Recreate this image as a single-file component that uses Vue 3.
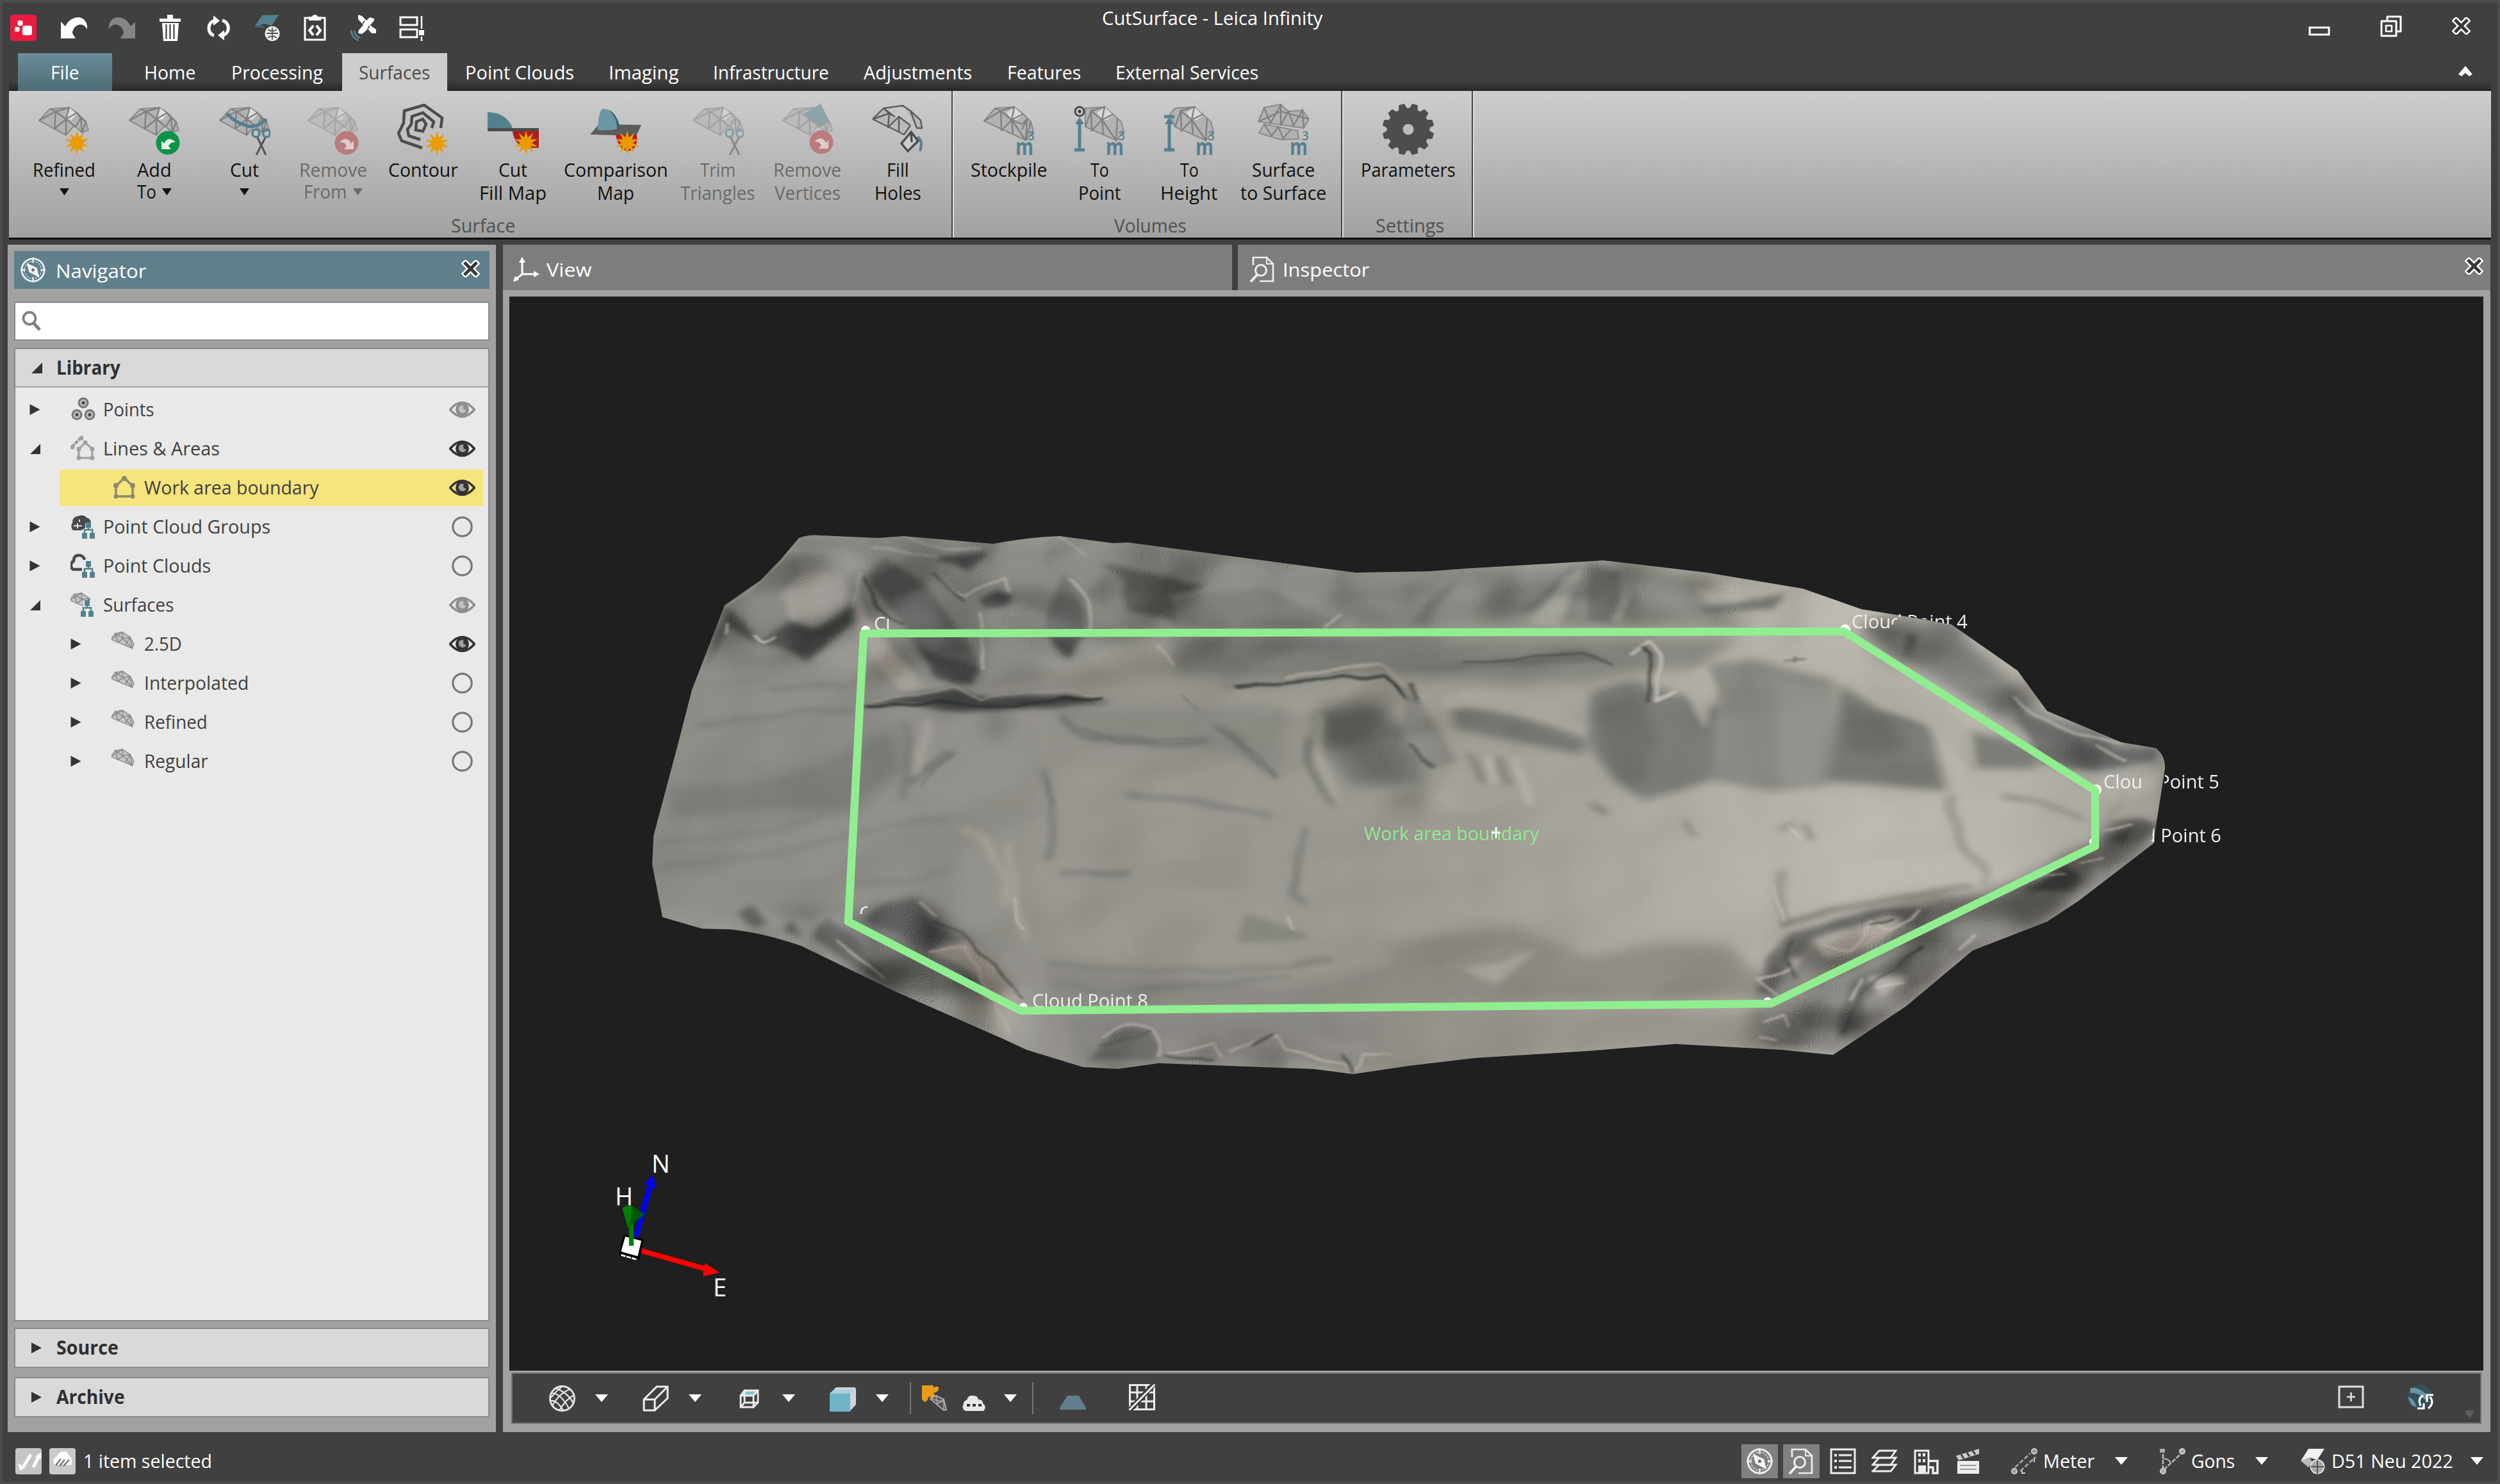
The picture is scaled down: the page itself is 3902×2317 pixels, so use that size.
<script setup>
const vFit = {
  mounted(el, { value }) {
    const natural = el.offsetWidth
    if (!natural || !value) return
    el.style.transform = `scaleX(${value / natural})`
    el.style.marginRight = `${value - natural}px`
  },
}

const radial = (cx, cy, outer, inner, count, ky = 1) =>
  Array.from({ length: count * 2 }, (_, i) => {
    const r = i % 2 ? inner : outer
    const a = (Math.PI * i) / count - Math.PI / 2
    return `${(cx + r * Math.cos(a)).toFixed(1)},${(cy + r * ky * Math.sin(a)).toFixed(1)}`
  }).join(' ')

const burst = radial(60, 61, 19, 9, 10)

const gear = Array.from({ length: 12 }, (_, i) =>
  [[-10.5, 33], [-6, 40], [6, 40], [10.5, 33]].map(([d, r]) => {
    const a = ((i * 30 + 15 + d) * Math.PI) / 180
    return `${(40 + r * Math.cos(a)).toFixed(1)},${(40 + r * Math.sin(a)).toFixed(1)}`
  }).join(' ')
).join(' ')

const quick = ['undo', 'redo', 'trash', 'sync', 'capglobe', 'clip', 'sat', 'layout']

const tabs = [
  ['Home', 80], ['Processing', 143], ['Surfaces', 111], ['Point Clouds', 170], ['Imaging', 110],
  ['Infrastructure', 181], ['Adjustments', 169], ['Features', 115], ['External Services', 223],
]

const groups = [
  {
    name: 'Surface', w: 100, width: 1473, pad: 16,
    items: [
      { icon: 'refined', width: 140, lines: [['Refined', 98], ['', 0]], arrow: true },
      { icon: 'add', width: 142, lines: [['Add', 54], ['To', 30]], arrow: true },
      { icon: 'cut', width: 139, lines: [['Cut', 45], ['', 0]], arrow: true },
      { icon: 'remove', width: 138, lines: [['Remove', 106], ['From', 67]], arrow: true, off: true },
      { icon: 'contour', width: 142, lines: [['Contour', 109]] },
      { icon: 'cutfill', width: 140, lines: [['Cut', 45], ['Fill Map', 105]] },
      { icon: 'compare', width: 180, lines: [['Comparison', 162], ['Map', 58]] },
      { icon: 'trim', width: 139, lines: [['Trim', 55], ['Triangles', 116]], off: true },
      { icon: 'vertices', width: 141, lines: [['Remove', 106], ['Vertices', 103]], off: true },
      { icon: 'fill', width: 140, lines: [['Fill', 35], ['Holes', 73]] },
    ],
  },
  {
    name: 'Volumes', w: 113, width: 608, pad: 18,
    items: [
      { icon: 'stockpile', width: 140, lines: [['Stockpile', 120]] },
      { icon: 'topoint', width: 142, lines: [['To', 29], ['Point', 67]] },
      { icon: 'toheight', width: 138, lines: [['To', 29], ['Height', 89]] },
      { icon: 'surfsurf', width: 156, lines: [['Surface', 98], ['to Surface', 134]] },
    ],
  },
  {
    name: 'Settings', w: 107, width: 204, pad: 15,
    items: [{ icon: 'gear', width: 176, lines: [['Parameters', 148]] }],
  },
]

const tree = [
  { t: 'Points', w: 80, icon: 'points', arrow: 'right', eye: 'dim' },
  { t: 'Lines & Areas', w: 182, icon: 'lines', arrow: 'open', eye: 'on' },
  { t: 'Work area boundary', w: 273, icon: 'area', sub: true, sel: true, eye: 'on' },
  { t: 'Point Cloud Groups', w: 261, icon: 'pcgroup', arrow: 'right', eye: 'off' },
  { t: 'Point Clouds', w: 168, icon: 'pcloud', arrow: 'right', eye: 'off' },
  { t: 'Surfaces', w: 110, icon: 'surfaces', arrow: 'open', eye: 'dim' },
  { t: '2.5D', w: 59, icon: 'mesh-s', sub: true, arrow: 'right', eye: 'on' },
  { t: 'Interpolated', w: 163, icon: 'mesh-s', sub: true, arrow: 'right', eye: 'off' },
  { t: 'Refined', w: 99, icon: 'mesh-s', sub: true, arrow: 'right', eye: 'off' },
  { t: 'Regular', w: 100, icon: 'mesh-s', sub: true, arrow: 'right', eye: 'off' },
]
</script>

<template>
  <div class="app">
    <svg class="sheet" width="0" height="0" aria-hidden="true">
      <defs>
        <symbol id="logo" viewBox="0 0 41 41">
          <rect width="41" height="41" rx="5" fill="#ed1a3f" />
          <rect x="19" y="17" width="15" height="15" rx="3" fill="#fff" />
          <rect x="11.500" y="9" width="8" height="8" rx="2" fill="#fff" />
          <rect x="7" y="19" width="7.500" height="7.500" rx="2" fill="#fff" />
        </symbol>
        <symbol id="undo" viewBox="0 0 41 41">
          <path d="M0 11 L7 18 C12 8 20 4 28 4 C37 5 42 13 41 23 C38 16 31 13 25 17 C20 20 18 25 18 29 L23 37 L0 37 Z" fill="#fff" />
        </symbol>
        <symbol id="redo" viewBox="0 0 41 41">
          <path d="M41 11 L34 18 C29 8 21 4 13 4 C4 5 -1 13 0 23 C3 16 10 13 16 17 C21 20 23 25 23 29 L18 37 L41 37 Z" fill="#858585" />
        </symbol>
        <symbol id="trash" viewBox="0 0 41 41">
          <path d="M4 6h33v5H4zM16 0h9v7h-9zM8 13h26l-2 28H10z" fill="#fff" />
          <path d="M14.500 15v23M20.500 15v23M26.500 15v23" stroke="#404040" stroke-width="2.200" />
        </symbol>
        <symbol id="sync" viewBox="0 0 41 41">
          <path d="M13 32 C2 30 2 11 15 9 M26 9 C38 11 39 30 26 32" fill="none" stroke="#fff" stroke-width="5" />
          <path d="M12 1 L22 9.500 L12 17Z M29 24 L19 32 L29 40Z" fill="#fff" />
        </symbol>
        <symbol id="capglobe" viewBox="0 0 41 41">
          <path d="M13 1 L39 0 L28 17 L16 14 L1 19 Z" fill="#54808e" />
          <path d="M1 19 L13 15 L18 21 Z" fill="#3f6470" />
          <circle cx="29" cy="29.500" r="11.500" fill="#ededed" />
          <path d="M20 29h18M29 20v19M22 23q7 5 14 0M22 36q7-5 14 0" fill="none" stroke="#555" stroke-width="1.800" />
        </symbol>
        <symbol id="clip" viewBox="0 0 41 41">
          <path d="M5 5h31v34H5z" fill="none" stroke="#fff" stroke-width="3" />
          <path d="M11 3h5q1-3 4.500-3t4.500 3h5v6H11z" fill="#fff" />
          <path d="M18 17 L12 24.500 L18 32 M23 17 L29 24.500 L23 32" fill="none" stroke="#fff" stroke-width="4" />
        </symbol>
        <symbol id="sat" viewBox="0 0 41 41">
          <path d="M12 0 L18 2 L25 9 L30 4 L37 6 L37 9 L31 16 L33 18 L40 23 L40 29 L33 29 L27 22 L22 27 L18 30 L12 29 L13 24 L20 16 L12 7 Z" fill="#fff" />
          <path d="M22 9 L19 14 M30 17 L27 22" stroke="#404040" stroke-width="1.500" />
          <path d="M1 24 Q2 37 13 40 M6 25 Q7 34 15 36" fill="none" stroke="#54808e" stroke-width="2.800" />
        </symbol>
        <symbol id="layout" viewBox="0 0 41 41">
          <path d="M3 4h26v12H3zM3 23h26v12H3z" fill="none" stroke="#fff" stroke-width="3" />
          <path d="M36 2v20M36 34v7" stroke="#fff" stroke-width="2.500" /><rect x="32" y="24" width="8" height="8" fill="#fff" />
        </symbol>

        <symbol id="mesh-cut" viewBox="0 0 80 80">
          <path d="M1 26 L18 8 L48 6 L60 14 L74 28 L78 41 L68 45 L56 34 L43 49 Z" fill="#b2b2b2" stroke="#8a8a8a" stroke-width="2" stroke-linejoin="round" />
          <path d="M48 6 L60 16 L52 25 L43 24 Z" fill="#dedede" />
          <path d="M1 26 L27 12 L48 6 L43 24 L27 12 L25 39 L43 24 L43 49 M18 8 L27 12 M43 24 L60 14 M43 24 L58 36 L66 22 L60 14 M66 22 L74 28 L68 45 L66 22" fill="none" stroke="#808080" stroke-width="2.400" stroke-linejoin="round" />
        </symbol>
        <symbol id="mesh-full" viewBox="0 0 80 80">
          <path d="M1 27 L18 7 L48 5 L62 16 L74 28 L78 44 L66 57 Z" fill="#b2b2b2" stroke="#8a8a8a" stroke-width="2.200" stroke-linejoin="round" />
          <path d="M48 5 L62 18 L52 25 L44 25 L36 14 Z" fill="#d8d8d8" />
          <path d="M1 27 L27 11 L48 5 L44 25 L27 11 L28 42 L44 25 L46 48 M18 7 L27 11 M44 25 L62 16 M44 25 L66 57 L68 24 L60 40 M44 25 L60 32 L68 24 M74 28 L66 57" fill="none" stroke="#808080" stroke-width="2.400" stroke-linejoin="round" />
        </symbol>
        <symbol id="m3" viewBox="0 0 80 80">
          <text x="50" y="80" font-family="Open Sans, sans-serif" font-weight="700" font-size="35" fill="#54808e" textLength="28" lengthAdjust="spacingAndGlyphs">m</text>
          <text x="69" y="57" font-family="Open Sans, sans-serif" font-weight="600" font-size="19" fill="#54808e">3</text>
        </symbol>
        <symbol id="scissors" viewBox="0 0 80 80">
          <path d="M59 51 L73 80 M73 51 L58 80" stroke="#555" stroke-width="3" />
          <ellipse cx="57.500" cy="46" rx="5.500" ry="6" fill="none" stroke="#54808e" stroke-width="3.500" /><ellipse cx="74" cy="46" rx="5.500" ry="6" fill="none" stroke="#54808e" stroke-width="3.500" />
        </symbol>
        <symbol id="refined" viewBox="0 0 80 80"><use href="#mesh-cut" /><polygon :points="burst" fill="#ea9b00" /></symbol>
        <symbol id="add" viewBox="0 0 80 80"><use href="#mesh-cut" /><circle cx="61" cy="61" r="18.500" fill="#0b9447" /><path d="M51 58 L55 62 Q61 49 73 60 Q65 59 62 66 L66 71 L51 71Z" fill="#e5f0e8" /></symbol>
        <symbol id="cut" viewBox="0 0 80 80"><use href="#mesh-cut" /><path d="M12 15 Q25 30 45 35 Q60 38 74 24" fill="none" stroke="#54808e" stroke-width="5" /><use href="#scissors" /></symbol>
        <symbol id="remove" viewBox="0 0 80 80"><g opacity=".45"><use href="#mesh-cut" /></g><circle cx="61" cy="61" r="18.500" fill="#bb7b7d" /><path d="M72 58 L68 62 Q62 49 50 60 Q58 59 61 66 L57 71 L72 71Z" fill="#dccccc" /></symbol>
        <symbol id="contour" viewBox="0 0 80 80">
          <g fill="none" stroke="#4c4c4c" stroke-width="4.500"><path d="M39 69 L7 58 L2 46 L10 30 L11 11 L42 2 L70 22 L68 38" /><path d="M36 56 L18 50 L16 40 L22 32 L23 20 L40 14 L57 28 L54 38" /><path d="M30 28 L40 24 L45 32 L40 43 L29 41 Z" /></g><polygon :points="burst" transform="translate(2 1)" fill="#ea9b00" />
        </symbol>
        <symbol id="cutfill" viewBox="0 0 80 80"><path d="M0 13 Q30 14 39 38 L0 38Z" fill="#54808e" /><path d="M39 43 H81 V69 H62 Q42 66 39 43" fill="#ae1f1b" /><rect y="38" width="81" height="5" fill="#4c4c4c" /><polygon :points="burst" fill="#ea9b00" /></symbol>
        <symbol id="compare" viewBox="0 0 80 80"><path d="M14 32 L80 33 L72 50 L0 48Z" fill="#5c5c5c" /><path d="M40 49 H73 Q75 73 58 74 Q44 70 40 49" fill="#c01818" /><path d="M12 41 Q13 12 19 8 Q40 6 47 38 Q30 43 12 41" fill="#6d97a5" /><path d="M30 10 Q41 15 47 38 L42 40 Q42 22 30 10" fill="#3f6470" /><polygon :points="burst" transform="translate(-2 0)" fill="#ea9b00" /></symbol>
        <symbol id="trim" viewBox="0 0 80 80"><g opacity=".5"><use href="#mesh-cut" /><use href="#scissors" /></g></symbol>
        <symbol id="vertices" viewBox="0 0 80 80"><g opacity=".5"><use href="#mesh-cut" /></g><path d="M60 0 L74 28 L60 36 L33 16Z" fill="#8da2a9" /><circle cx="61" cy="60" r="18.500" fill="#bb7b7d" /><path d="M72 57 L68 61 Q62 48 50 59 Q58 58 61 65 L57 70 L72 70Z" fill="#dccccc" /></symbol>
        <symbol id="fill" viewBox="0 0 80 80">
          <path d="M1 24 L18 7 L30 15 L35 22 L48 23 L58 36 L50 48 Z M48 3 L60 13 L78 30 L78 38 L70 38 L62 24Z" fill="#b8b8b8" />
          <path d="M1 24 L18 7 L48 3 L60 11 L76 26 L78 38 L70 38 L64 22 L60 11 M1 24 L50 48 L60 34 M1 24 L27 15 L18 7 L35 20 L27 15 L25 37 L42 20 L42 43 M42 20 L60 34" fill="none" stroke="#5c5c5c" stroke-width="2.400" stroke-linejoin="round" />
          <path d="M61 44 L46 62 L56 74 L72 58 Z L62 60" fill="#ccc" stroke="#4c4c4c" stroke-width="3.500" /><path d="M71 52 Q80 56 75 74" fill="none" stroke="#54808e" stroke-width="4" />
        </symbol>
        <symbol id="stockpile" viewBox="0 0 80 80"><use href="#mesh-full" /><use href="#m3" /></symbol>
        <symbol id="topoint" viewBox="0 0 80 80"><path d="M18 7 L48 5 L74 28 L78 44 L66 57 L18 36Z" fill="#b2b2b2" stroke="#8a8a8a" stroke-width="2" /><path d="M48 5 L62 18 L52 25 L44 25 L36 14 Z" fill="#d8d8d8" /><path d="M18 36 L27 11 L48 5 L44 25 L27 11 L28 42 L44 25 L46 48 M44 25 L62 16 M44 25 L66 57 L68 24" fill="none" stroke="#808080" stroke-width="2.400" /><circle cx="9" cy="12" r="7" fill="none" stroke="#4c4c4c" stroke-width="3" /><circle cx="9" cy="12" r="2.500" fill="#333" /><path d="M9 72V30M1 72H17" stroke="#54808e" stroke-width="5" /><path d="M9 21L16 32H2Z" fill="#54808e" /><use href="#m3" /></symbol>
        <symbol id="toheight" viewBox="0 0 80 80"><path d="M10 16 L18 7 L48 5 L74 28 L78 44 L66 57 L18 36Z" fill="#b2b2b2" stroke="#8a8a8a" stroke-width="2" /><path d="M48 5 L62 18 L52 25 L44 25 L36 14 Z" fill="#d8d8d8" /><path d="M18 36 L27 11 L48 5 L44 25 L27 11 L28 42 L44 25 L46 48 M44 25 L62 16 M44 25 L66 57 L68 24" fill="none" stroke="#808080" stroke-width="2.400" /><path d="M9 72V24M1 72H17M1 20H17" stroke="#54808e" stroke-width="5" /><path d="M9 21L16 32H2Z" fill="#54808e" /><use href="#m3" /></symbol>
        <symbol id="surfsurf" viewBox="0 0 80 80"><path d="M1 28 L10 6 L36 1 L48 12 L70 10 L80 24 L72 38 Z M2 46 L10 32 L62 42 L64 55 L36 56Z" fill="#b2b2b2" stroke="#8a8a8a" stroke-width="2" /><path d="M10 6 L20 30 L36 2 L36 34 L48 12 L56 34 L70 10 L72 38 M1 28 L36 12 L80 24 M10 32 L22 50 L32 36 L40 54 L52 40" fill="none" stroke="#808080" stroke-width="2.200" /><use href="#m3" /></symbol>
        <symbol id="gear" viewBox="0 0 80 80"><polygon :points="gear" fill="#4d4d4d" stroke="#4d4d4d" stroke-width="1" stroke-linejoin="round" /><circle cx="40" cy="40" r="8.500" fill="#bcbcbc" /></symbol>

        <symbol id="compass" viewBox="0 0 41 41">
          <circle cx="20.500" cy="20.500" r="18.500" fill="none" stroke="#e8eef0" stroke-width="3" /><circle cx="20.500" cy="20.500" r="14" fill="none" stroke="#e8eef0" stroke-width="1.300" stroke-dasharray="3 2" />
          <path d="M20.500 0v9M20.500 32v9M0 20.500h8M33 20.500h8" stroke="#e8eef0" stroke-width="2.500" /><path d="M10 9 L27 17 L31 33 L14 24Z" fill="#f4f4f4" /><circle cx="20.500" cy="20.500" r="2.500" fill="#666" />
        </symbol>
        <symbol id="xmark" viewBox="0 0 29 27">
          <path d="M6.500 5.500 L22.500 21.500 M22.500 5.500 L6.500 21.500" stroke="#fff" stroke-width="10" stroke-linecap="square" /><path d="M6.500 5.500 L22.500 21.500 M22.500 5.500 L6.500 21.500" stroke="#383838" stroke-width="5" stroke-linecap="square" />
        </symbol>
        <symbol id="search" viewBox="0 0 30 32"><circle cx="12" cy="12" r="9.500" fill="none" stroke="#808080" stroke-width="3.800" /><path d="M18 19 L28 30" stroke="#808080" stroke-width="5" /></symbol>
        <symbol id="eye" viewBox="0 0 41 41">
          <path d="M1.500 20.500 Q20.500 -1.500 39.500 20.500 Q20.500 42.500 1.500 20.500Z" fill="none" stroke="currentColor" stroke-width="3.600" /><circle cx="20.500" cy="20.500" r="10.500" fill="currentColor" /><path d="M22 14 a6 6 0 1 0 4.500 8 l-4-1.500z" fill="#ddd" opacity=".65" />
        </symbol>
        <symbol id="ring" viewBox="0 0 41 41"><circle cx="20.500" cy="20.500" r="14.700" fill="none" stroke="#777" stroke-width="3.200" /></symbol>
        <symbol id="points" viewBox="0 0 41 41">
          <g fill="#bbb" stroke="#777" stroke-width="3"><circle cx="20" cy="10" r="7" /><circle cx="10" cy="28.500" r="7" /><circle cx="30" cy="28.500" r="7" /></g><g fill="#444"><circle cx="20" cy="10" r="2.500" /><circle cx="10" cy="28.500" r="2.500" /><circle cx="30" cy="28.500" r="2.500" /></g>
        </symbol>
        <symbol id="area" viewBox="0 0 41 41">
          <path d="M20 5 L7 18 M20 5 L33 18 M7 18 V34 H33 V18" fill="none" stroke="#8d8a6a" stroke-width="3.500" /><g fill="#8d8a6a"><circle cx="20" cy="6" r="4" /><circle cx="7" cy="17" r="4" /><circle cx="33" cy="17" r="4" /><circle cx="7" cy="34" r="3.500" /><circle cx="33" cy="34" r="3.500" /></g>
        </symbol>
        <symbol id="lines" viewBox="0 0 41 41">
          <path d="M2 18 L17 3" stroke="#999" stroke-width="4.500" stroke-dasharray="6 1.500" /><path d="M23 11 L13 21 V35 H34 V21Z" fill="none" stroke="#a5a5a5" stroke-width="3.500" /><g fill="#a0a0a0"><circle cx="3" cy="18" r="3.500" /><circle cx="17" cy="4" r="3.500" /><circle cx="23" cy="11" r="3.500" /><circle cx="13" cy="21" r="3.500" /><circle cx="34" cy="21" r="3.500" /><circle cx="13" cy="35" r="3.500" /><circle cx="34" cy="35" r="3.500" /></g>
        </symbol>
        <symbol id="nodes" viewBox="0 0 41 41"><path d="M28 16V24M22 32V25H34V32" fill="none" stroke="#54808e" stroke-width="2.600" /><path d="M24 13h8v9h-8zM18 30h8v9h-8zM30 30h8v9h-8z" fill="#54808e" /></symbol>
        <symbol id="pcgroup" viewBox="0 0 41 41"><path d="M4 26 Q-1 22 3 14 Q3 5 11 4 Q20 0 25 6 Q32 8 32 15 L23 15 V22 L17 26Z" fill="#4a4a4a" /><path d="M11 15v8M5 19h13M14 9v4" stroke="#ddd" stroke-width="2" /><use href="#nodes" /></symbol>
        <symbol id="pcloud" viewBox="0 0 41 41"><path d="M18 26 H4 Q-2 22 3 14 L5 13 Q5 4 13 4 Q20 4 22 11" fill="none" stroke="#4a4a4a" stroke-width="4.500" /><use href="#nodes" /></symbol>
        <symbol id="mesh-s" viewBox="0 0 41 41"><path d="M-1 13 L6 4 L17 2 L29 10 L35 21 L32 27Z" fill="#c6c6c6" stroke="#999" stroke-width="1.800" /><path d="M-1 13 L17 2 L18 12 L6 4 L10 18 L18 12 L32 27 L29 10 L18 12 M22 22 L29 10" fill="none" stroke="#8a8a8a" stroke-width="1.600" /></symbol>
        <symbol id="surfaces" viewBox="0 0 41 41"><use href="#mesh-s" /><path d="M20 13H36V41H16V28H20Z" fill="#e9e9e9" /><use href="#nodes" x="-2" /></symbol>

        <symbol id="axes" viewBox="0 0 41 41"><path d="M14 28 V8 M14 28 L4 36 M14 28 H35" fill="none" stroke="#fff" stroke-width="3" /><path d="M14 1 L19 10 H9Z M41 28 L32 23 V33Z M0 40 L3 31 L9 37Z" fill="#fff" /></symbol>
        <symbol id="inspect" viewBox="0 0 41 41"><path d="M6 14 V2 H27 L37 12 V39 H16" fill="none" stroke="#eee" stroke-width="2.700" /><path d="M27 2V12H37" fill="none" stroke="#eee" stroke-width="2" /><circle cx="18" cy="22" r="8.500" fill="none" stroke="#eee" stroke-width="3" /><path d="M12 29 L2 40" stroke="#eee" stroke-width="4" /></symbol>

        <symbol id="globe" viewBox="0 0 41 41"><g fill="none" stroke="#e6e6e6" stroke-width="2.800"><circle cx="20.500" cy="20.500" r="19" /><path d="M4 12 Q18 12 31 36 M10 4 Q30 12 38 28 M2 24 Q12 22 22 39 M33 6 Q16 12 5 32 M39 15 Q26 22 16 39 M20 2 Q10 10 3 19" stroke-width="2.200" /></g></symbol>
        <symbol id="boxwire" viewBox="0 0 41 41"><path d="M2 22H19V39H2Z L22 2H39L19 22M39 2V20L19 39" fill="none" stroke="#eee" stroke-width="3" stroke-linejoin="round" /></symbol>
        <symbol id="cubewire" viewBox="0 0 41 41"><path d="M13 9H32L28 15H9Z" fill="#8cc4d4" /><path d="M7 16H27V34H7Z L13 8H34V27L27 34M27 16L34 8M13 8V27H34M13 27L7 34" fill="none" stroke="#eee" stroke-width="2.800" /></symbol>
        <symbol id="cube" viewBox="0 0 41 41"><path d="M0 13 L10 3 H38 Q41 3 41 6 V30 L31 41V13Z" fill="#ccd4d7" /><rect y="13" width="32" height="28" fill="#6fb4c9" /><path d="M0 13 L6 7 H36 L32 13Z" fill="#a8cfd9" /></symbol>
        <symbol id="orange" viewBox="0 0 41 41"><path d="M0 0H17L19 4Q22 0 26 3Q27 7 23 10L18 12L21 17L17 21L11 17L8 24L4 26L0 22Z" fill="#ea9b1b" /><path d="M13 21 L22 16 L34 22 L38 38 L34 39Z" fill="#555" stroke="#aaa" stroke-width="2" /><path d="M22 16L24 29L34 22L34 39M13 21L34 26" stroke="#aaa" stroke-width="1.600" fill="none" /></symbol>
        <symbol id="cloud" viewBox="0 0 41 41"><path d="M6 40 Q-1 36 3 29 Q3 24 8 23 Q10 15 17 16 Q25 16 26 22 Q33 22 33 28 Q40 34 34 40Z" fill="#e8e8e8" /><path d="M8 29h5v4H8zM17 29h5v4h-5zM26 29h5v4h-5z" fill="#333" /></symbol>
        <symbol id="trapezoid" viewBox="0 0 41 41"><path d="M0 40V37L12 18H30L41 37V40Z" fill="#5f7f8a" /></symbol>
        <symbol id="gridoff" viewBox="0 0 41 41"><path d="M1.500 1.500H39.500V39.500H1.500ZM13 1V40M27 1V40M1 13H40M1 27H40" fill="none" stroke="#eee" stroke-width="3" /><path d="M39 0 L2 40" stroke="#404040" stroke-width="8" /><path d="M40 1 L1 40" stroke="#eee" stroke-width="3" /></symbol>
        <symbol id="plusbox" viewBox="0 0 41 41"><path d="M2 4H39V36H2Z" fill="none" stroke="#e0e0e0" stroke-width="3" /><path d="M20.500 13V27M14 20H27" stroke="#e0e0e0" stroke-width="2.600" /></symbol>
        <symbol id="globesync" viewBox="0 0 41 41"><circle cx="19" cy="20" r="19" fill="#35505a" /><path d="M4 6 Q20 4 34 22 L26 24 Q16 12 4 14Z M0 20 Q10 22 14 36 L6 33Z" fill="#6a95a3" /><path d="M24 18 Q15 22 20 34 M15 38H25V30 M32 38 Q42 30 35 20 M30 28V17H40" fill="none" stroke="#fff" stroke-width="3.200" /></symbol>

        <symbol id="list" viewBox="0 0 41 41"><path d="M2 2H39V39H2Z" fill="none" stroke="#eee" stroke-width="3" /><path d="M7 11h4M7 20h4M7 30h4" stroke="#eee" stroke-width="4" /><path d="M14 11h20M14 20h20M14 30h20" stroke="#eee" stroke-width="2.800" /></symbol>
        <symbol id="layers" viewBox="0 0 41 41"><g fill="#404040" stroke="#eee" stroke-width="2.800"><path d="M2 36 L12 26H38L30 36Z" /><path d="M2 26 L12 15H38L30 26Z" /><path d="M2 15 L12 4H38L30 15Z" /></g></symbol>
        <symbol id="building" viewBox="0 0 41 41"><path d="M3 4H24V39H3Z" fill="none" stroke="#eee" stroke-width="3" /><path d="M8 8h4v5H8zM15 8h4v5h-4zM8 17h4v5H8zM15 17h4v5h-4zM8 27h12v12H8z" fill="#eee" /><path d="M24 20H38V39H31V30H24" fill="none" stroke="#eee" stroke-width="3.500" /></symbol>
        <symbol id="clapper" viewBox="0 0 41 41"><path d="M4 20H38V40H4Z" fill="#eee" /><path d="M2 12 L38 1 V9 L6 19Z" fill="#ccc" /><path d="M10 10L14 16M19 7L23 13M28 4L32 10" stroke="#404040" stroke-width="3" /><path d="M8 27H34M8 33H34" stroke="#999" stroke-width="2" /></symbol>
        <symbol id="meter" viewBox="0 0 41 41"><path d="M6 30 L30 8 M14 36L38 14" stroke="#aaa" stroke-width="2.500" stroke-dasharray="7 3" /><circle cx="5" cy="36" r="4" fill="#999" stroke="#ccc" stroke-width="2" /><circle cx="36" cy="5" r="4" fill="#999" stroke="#ccc" stroke-width="2" /><path d="M17 35v4h5M36 15v7" stroke="#ccc" stroke-width="2" fill="none" /></symbol>
        <symbol id="gons" viewBox="0 0 41 41"><path d="M6 34V8M7 34L36 7" stroke="#bbb" stroke-width="2.500" stroke-dasharray="7 2" /><path d="M6 16Q17 17 18 24" fill="none" stroke="#bbb" stroke-width="2" /><path d="M1 1h8v6H1z" fill="#aaa" /><circle cx="6" cy="36" r="4" fill="#aaa" stroke="#ccc" stroke-width="2" /><circle cx="36" cy="5" r="4" fill="#aaa" stroke="#ccc" stroke-width="2" /></symbol>
        <symbol id="datum" viewBox="0 0 41 41"><path d="M14 1 H39 L28 18 L16 15 L2 20Z" fill="#f2f2f2" /><path d="M2 20 L16 15 L20 22 L14 30Z" fill="#bbb" /><circle cx="28" cy="29" r="10.500" fill="#aaa" stroke="#ddd" stroke-width="2" /><path d="M18 29H38M28 19V40" stroke="#555" stroke-width="2" /></symbol>
        <symbol id="chip1" viewBox="0 0 41 41"><rect width="41" height="41" rx="4" fill="#c3c5c7" /><path d="M24 10 L13 28 M38 10 L28 30" stroke="#fff" stroke-width="5" /><path d="M4 24 L16 30 L7 35Z M41 6 L31 13 L40 17Z" fill="#fff" /></symbol>
        <symbol id="chip2" viewBox="0 0 41 41"><rect width="41" height="41" rx="4" fill="#c9cacb" /><path d="M8 26 Q4 18 10 14 L17 6 L26 5 L34 15 Q37 20 34 26Z" fill="#fff" /><path d="M10 27L18 17M16 28L24 18M22 28L31 18" stroke="#777" stroke-width="2.600" /></symbol>
      </defs>
    </svg>

    <header class="title">
      <div class="quick">
        <svg class="i41 logo"><use href="#logo" /></svg>
        <svg v-for="q in quick" :key="q" class="i41"><use :href="'#' + q" /></svg>
      </div>
      <div class="caption"><span v-fit="344" class="t">CutSurface - Leica Infinity</span></div>
      <div class="winbtns">
        <svg width="34" height="34" viewBox="0 0 34 34"><path d="M2 19H32V30H2Z" fill="none" stroke="#fff" stroke-width="3" /></svg>
        <svg width="34" height="34" viewBox="0 0 34 34"><path d="M11 8V2H32V25H26" fill="none" stroke="#fff" stroke-width="3" stroke-linejoin="round" /><path d="M2 9H25V32H2Z" fill="none" stroke="#fff" stroke-width="3" stroke-linejoin="round" /><path d="M9 16H18V25H9Z" fill="none" stroke="#fff" stroke-width="2.500" /></svg>
        <svg width="29" height="27"><use href="#xmark" /></svg>
      </div>
    </header>

    <nav class="tabs">
      <div class="tab file"><span v-fit="45" class="t">File</span></div>
      <div v-for="[name, w] in tabs" :key="name" class="tab" :class="{ active: name === 'Surfaces' }"><span v-fit="w" class="t">{{ name }}</span></div>
      <svg class="collapse" width="22" height="16" viewBox="0 0 22 16"><path d="M0 13 L11 0 L22 13 L17 16 L11 11 L5 16Z" fill="#fff" /></svg>
    </nav>

    <section class="ribbon">
      <div v-for="g in groups" :key="g.name" class="group" :style="{ width: g.width + 'px' }">
        <div class="items" :style="{ paddingLeft: g.pad + 'px' }">
          <div v-for="b in g.items" :key="b.icon" class="btn" :class="{ off: b.off }" :style="{ width: b.width + 'px' }">
            <svg class="i80"><use :href="'#' + b.icon" /></svg>
            <div v-for="(l, i) in b.lines" :key="i" class="line" :class="{ up: b.arrow && i }">
              <span v-if="l[0]" v-fit="l[1]" class="t">{{ l[0] }}</span>
              <svg v-if="b.arrow && i" :class="{ gap: l[0] }" width="15" height="11" viewBox="0 0 15 11"><path d="M0 0H15L7.500 11Z" fill="currentColor" /></svg>
            </div>
          </div>
        </div>
        <div class="gname"><span v-fit="g.w" class="t">{{ g.name }}</span></div>
      </div>
    </section>

    <main class="body">
      <aside class="navp">
        <div class="nhead">
          <svg class="i39"><use href="#compass" /></svg>
          <span v-fit="142" class="t">Navigator</span>
          <svg class="end" width="29" height="27"><use href="#xmark" /></svg>
        </div>
        <div class="search"><svg width="30" height="32"><use href="#search" /></svg></div>
        <div class="library">
          <div class="shead"><svg class="tri" viewBox="0 0 17 17"><path d="M17 0V17H0Z" fill="#333" /></svg><span v-fit="100" class="t">Library</span></div>
          <div class="tree">
            <div v-for="r in tree" :key="r.t + r.icon" class="row" :class="{ sub: r.sub }">
              <div class="cell" :class="{ sel: r.sel }">
                <svg class="tri" viewBox="0 0 17 17"><path v-if="r.arrow === 'right'" d="M0.500 0L16.500 8.500L0.500 17Z" fill="#333" /><path v-if="r.arrow === 'open'" d="M17 1V17H1Z" fill="#333" /></svg>
                <svg class="i41 ric"><use :href="'#' + r.icon" /></svg>
                <span v-fit="r.w" class="t">{{ r.t }}</span>
                <svg class="i41 end" :class="r.eye"><use :href="r.eye === 'off' ? '#ring' : '#eye'" /></svg>
              </div>
            </div>
          </div>
        </div>
        <div class="shead box"><svg class="tri" viewBox="0 0 17 17"><path d="M0 0L16 8.500L0 17Z" fill="#333" /></svg><span v-fit="97" class="t">Source</span></div>
        <div class="shead box"><svg class="tri" viewBox="0 0 17 17"><path d="M0 0L16 8.500L0 17Z" fill="#333" /></svg><span v-fit="107" class="t">Archive</span></div>
      </aside>

      <section class="view">
        <div class="vtabs">
          <div class="vtab first"><svg class="i41"><use href="#axes" /></svg><span v-fit="70" class="t">View</span></div>
          <div class="vtab"><svg class="i41"><use href="#inspect" /></svg><span v-fit="135" class="t">Inspector</span><svg class="end" width="29" height="27"><use href="#xmark" /></svg></div>
        </div>
        <svg class="scene" viewBox="795 463 3081 1677">
          <defs>
            <linearGradient id="base" gradientUnits="userSpaceOnUse" x1="1020" y1="1200" x2="3380" y2="1300">
              <stop offset="0" stop-color="#8b8a85" /><stop offset=".35" stop-color="#96948d" /><stop offset=".55" stop-color="#a09e96" /><stop offset=".72" stop-color="#b4b1a8" /><stop offset=".88" stop-color="#bab6ad" /><stop offset="1" stop-color="#a19e96" />
            </linearGradient>
            <filter id="b20" x="-20%" y="-20%" width="140%" height="140%"><feGaussianBlur stdDeviation="16" /></filter>
            <filter id="b12" x="-20%" y="-20%" width="140%" height="140%"><feGaussianBlur stdDeviation="11" /></filter>
            <filter id="b7" x="-10%" y="-10%" width="120%" height="120%" color-interpolation-filters="sRGB">
              <feTurbulence type="fractalNoise" baseFrequency=".01 .011" numOctaves="1" seed="7" result="n" />
              <feDisplacementMap in="SourceGraphic" in2="n" scale="36" xChannelSelector="R" yChannelSelector="G" /><feGaussianBlur stdDeviation="7" />
            </filter>
            <filter id="b2" x="-10%" y="-10%" width="120%" height="120%" color-interpolation-filters="sRGB">
              <feTurbulence type="fractalNoise" baseFrequency=".018" numOctaves="1" seed="3" result="n" />
              <feDisplacementMap in="SourceGraphic" in2="n" scale="22" xChannelSelector="R" yChannelSelector="G" /><feGaussianBlur stdDeviation="3" />
            </filter>
            <filter id="relief" x="0" y="0" width="100%" height="100%" color-interpolation-filters="sRGB">
              <feTurbulence type="fractalNoise" baseFrequency=".0055 .0075" numOctaves="2" seed="12" result="n" />
              <feColorMatrix in="n" type="matrix" values="0 0 0 0 0  0 0 0 0 0  0 0 0 0 0  1 0 0 0 0" result="h" />
              <feGaussianBlur in="h" stdDeviation="4" result="hb" />
              <feDiffuseLighting in="hb" surfaceScale="105" diffuseConstant=".74" lighting-color="#fff"><feDistantLight azimuth="215" elevation="44" /></feDiffuseLighting>
            </filter>
            <mask id="rough" maskUnits="userSpaceOnUse" x="1000" y="820" width="2400" height="880">
              <rect x="1000" y="820" width="2400" height="880" fill="#222" />
              <g filter="url(#b20)" fill="#fff">
                <path d="M1060 820 H2900 L3400 1160 V1240 H3260 L2900 1000 L2600 970 L2200 960 L2000 1030 L1650 1060 L1370 1070 L1250 1030 L1050 1060Z" fill="#aaa" />
                <path d="M1020 1420 L1330 1430 L1420 1390 L1540 1500 L1620 1580 L1600 1650 L1020 1470Z" />
                <path d="M1700 1620 H2150 V1690 H1700Z" fill="#aaa" />
                <path d="M2740 1560 L2780 1460 L2980 1410 L3270 1300 L3380 1280 V1340 L3080 1500 L2880 1660 H2720Z" />
                <path d="M1980 1080 L2180 1070 L2290 1180 L2280 1280 L2160 1260Z" fill="#999" />
              </g>
            </mask>
            <clipPath id="land"><path d="M1247 840 Q1262 834 1283 836 L1371 840 L1410 837 L1550 849 Q1610 838 1654 837 L1737 848 L1761 847 L2116 894 L2230 892 L2283 888 L2470 877 L2503 875 L2664 894 L2814 919 L2905 951 L2996 966 L3046 975 L3149 1047 L3195 1110 L3311 1159 L3365 1168 Q3380 1180 3379 1200 L3365 1290 L3361 1317 L3245 1406 L3195 1439 L3079 1484 L2975 1571 L2861 1647 L2780 1639 L2615 1630 L2478 1641 L2300 1652 L2200 1664 L2112 1677 L2050 1669 L1809 1660 L1745 1669 L1690 1666 L1602 1639 L1570 1624 L1395 1547 L1251 1477 Q1190 1456 1139 1451 L1096 1450 L1034 1432 L1018 1350 L1020 1305 L1056 1170 L1080 1077 L1131 945 L1187 906 L1219 873 Z" /></clipPath>
            <clipPath id="c0"><path d="M1355 950H1383V966H1389V984H1355Z" /></clipPath>
            <clipPath id="c4"><path d="M2880 940H3100V990H3052L3046 976L2996 965L2965 963L2945 985L2880 990Z" /></clipPath>
            <clipPath id="c5"><path d="M3270 1190H3345V1250H3270ZM3380 1190H3480V1250H3376Z" /></clipPath>
            <clipPath id="c6"><path d="M3363 1280H3480V1340H3354Z" /></clipPath>
            <clipPath id="c7"><rect x="1338" y="1405" width="16" height="22" /></clipPath>
          </defs>
          <g clip-path="url(#land)">
            <rect x="1000" y="820" width="2400" height="880" fill="url(#base)" />
            <g transform="translate(980 780) scale(.7972 .5995)">
              <g filter="url(#b20)">
                <path d="M190 270 L330 90 L700 100 L1000 110 L1600 190 V330 L1050 340 L700 460 L560 480 L440 300 L340 430 L150 450Z" fill="#787974" opacity=".6" />
                <path d="M80 740 Q260 760 440 640 L530 590 L545 700 L440 820 Q250 790 80 830Z" fill="#777772" opacity=".7" />
                <path d="M1050 350 H1600 V440 L1300 470 L1080 460Z" fill="#6c6e6a" opacity=".7" />
                <path d="M830 540 H1300 L1280 700 L1100 640 L900 640Z" fill="#80807b" opacity=".6" />
                <path d="M1350 560 L1460 530 L1560 640 V740 L1420 750 L1360 650Z" fill="#666965" opacity=".8" />
                <path d="M820 1230 L1300 1260 L1600 1180 V1330 L820 1330Z" fill="#82807b" opacity=".6" />
                <path d="M860 1340 H1568 V1480 H880Z" fill="#7d7b76" opacity=".6" />
                <path d="M440 1090 L560 1030 L660 1130 L700 1270 L520 1290 L380 1170Z" fill="#6b6c69" opacity=".9" />
                <path d="M840 700 H1250 L1290 1190 L860 1200 L780 960Z" fill="#9c9a93" opacity=".6" />
                <path d="M700 540 L760 560 L740 630 L690 620Z" fill="#71736f" opacity=".6" />
              </g>
              <g filter="url(#b7)">
                <path d="M150 455 L190 330 L240 372 L300 390 L345 430 L445 310 L440 275 L370 340 L320 320 L250 370 L195 280 L170 360Z" fill="#484a48" opacity=".85" />
                <path d="M465 200 L500 150 L560 190 L600 250 L640 330 L690 440 L640 480 L590 440 L540 320Z" fill="#585b58" opacity=".8" />
                <path d="M570 390 L650 420 L690 440 L670 480 L600 465Z" fill="#3f4240" opacity=".8" />
                <path d="M445 250 Q480 330 580 500 L540 510 Q450 400 445 250" fill="#a7a19a" opacity=".8" />
                <path d="M300 240 L340 190 L430 200 L430 270 L370 330 L320 310Z" fill="#9d9a93" opacity=".8" />
                <path d="M330 130 L440 130 L470 170 L430 200 L330 190Z" fill="#8c8b86" />
                <path d="M600 150 L700 140 L665 190Z M685 262 L730 225 L760 250 L750 275 L700 285Z" fill="#3d403e" opacity=".85" />
                <path d="M855 195 Q785 300 862 420 Q925 320 855 195" fill="#5e615d" opacity=".85" />
                <path d="M825 350 Q860 370 900 345 L862 415Z" fill="#3f4240" opacity=".8" />
                <path d="M915 165 L990 185 L1040 195 L1140 220 L1060 250 L1070 320 L980 290 L970 220Z" fill="#4b4e4b" opacity=".65" />
                <path d="M1040 260 L1240 230 L1400 320 L1390 335 H1060Z" fill="#666864" opacity=".5" />
                <path d="M460 535 L560 520 L640 492 L690 515 L760 512 L880 508 L950 525 L900 530 L780 545 L660 552 L560 540Z" fill="#3c3f3d" opacity=".9" />
                <path d="M540 580 Q570 660 540 780 M980 765 Q1130 770 1260 830 M840 975 L990 970 M815 700 Q840 820 820 940 M1320 850 Q1320 960 1300 1020 L1330 1050" fill="none" stroke="#6c6e6a" stroke-width="14" opacity=".6" />
                <path d="M560 740 L630 650 M850 560 Q870 620 930 620 Q1060 640 1140 630 M1150 590 Q1230 660 1270 720 M1330 620 Q1340 730 1380 790" fill="none" stroke="#666864" stroke-width="14" opacity=".7" />
                <path d="M1350 560 Q1340 680 1400 780 M590 570 Q580 650 570 720 M750 900 Q750 1050 780 1140 M650 850 Q740 900 740 1060" fill="none" stroke="#a8a59d" stroke-width="16" opacity=".7" />
                <path d="M60 890 Q260 880 440 800 M60 960 Q300 940 440 870 M450 880 Q520 840 620 830 M440 1000 Q560 1000 620 960" fill="none" stroke="#7b7b76" stroke-width="14" opacity=".5" />
                <path d="M215 1075 L245 1050 L270 1100 L245 1110Z M300 1130 L320 1095 L340 1150Z M365 1150 L390 1090 L440 1140 L510 1260 L440 1210Z" fill="#4f5250" opacity=".8" />
                <path d="M450 1090 L500 1050 L570 1035 L590 1100 L640 1130 L590 1180 L530 1130Z" fill="#555855" opacity=".75" />
                <path d="M590 1180 L670 1150 L780 1300 L740 1400 L690 1260Z" fill="#a29b94" opacity=".8" />
                <path d="M1195 1150 L1210 1080 L1300 1120 L1340 1150Z" fill="#6f716c" opacity=".5" />
                <path d="M930 1420 Q950 1370 1010 1378 L1045 1420 L1020 1460 H900Z" fill="#5c5d5a" opacity=".8" />
                <path d="M280 490 L430 480 M130 585 L440 545 M1170 490 L1290 480" fill="none" stroke="#70716c" stroke-width="9" opacity=".7" />
                <path d="M820 1210 Q1060 1260 1380 1200 M830 1270 Q1000 1290 1300 1240" fill="none" stroke="#777671" stroke-width="12" opacity=".6" />
              </g>
              <g filter="url(#b2)" fill="none" stroke-linejoin="round" stroke-linecap="round">
                <path d="M470 535 L620 530 L760 540 L850 518 L930 518" stroke="#343735" stroke-width="7" />
                <path d="M480 520 L600 500 L640 488 L690 520 L740 505 L860 500 L930 512" stroke="#aba59c" stroke-width="4" opacity=".7" />
                <path d="M1190 490 L1290 480 L1400 462 L1480 462 L1548 532" stroke="#3f4240" stroke-width="8" opacity=".9" />
                <path d="M1290 465 L1390 440 L1470 430 L1500 455 L1555 515" stroke="#aba59c" stroke-width="10" opacity=".8" />
                <path d="M605 195 L640 240 L660 250 L735 205 L750 235 M690 300 L700 440 M870 210 Q910 260 903 340 M1040 380 L1065 430 M1365 330 L1395 300" stroke="#b3aca3" stroke-width="6" opacity=".8" />
                <path d="M480 120 L600 150 M540 95 L620 130 L690 130 M845 95 L900 150" stroke="#a5a19a" stroke-width="7" opacity=".6" />
                <path d="M340 90 L300 160 L260 210 L190 280 M455 190 L440 280 M315 240 L325 310" stroke="#9f9b94" stroke-width="6" opacity=".6" />
                <path d="M460 200 Q480 300 540 320 M600 190 L655 262" stroke="#494c49" stroke-width="6" opacity=".7" />
                <path d="M250 355 L265 370 L285 355 M190 320 L192 345" stroke="#c5bfb6" stroke-width="5" />
                <path d="M410 1150 L500 1250 M590 1175 L660 1165 L700 1260 L745 1390 M570 1050 L600 1085" stroke="#b0a79e" stroke-width="6" opacity=".8" />
                <path d="M600 1100 L650 1130 L740 1240 L770 1300 M925 1425 L1030 1385" stroke="#555652" stroke-width="6" opacity=".8" />
                <path d="M1060 1440 L1150 1420 L1160 1450 M1180 1440 L1270 1395 L1285 1430 L1345 1450 L1400 1470 L1420 1490 L1440 1445 L1480 1440 L1510 1455" stroke="#b9b1a8" stroke-width="5" opacity=".8" />
                <path d="M1050 1450 L1140 1460 M1400 1450 L1418 1490 M1225 1425 L1260 1395" stroke="#5a5b57" stroke-width="7" />
                <path d="M930 1400 Q980 1350 1030 1385 Q1050 1420 1035 1450" stroke="#aaa49b" stroke-width="6" />
                <path d="M755 1040 Q755 1080 775 1120 M1290 1090 L1305 1115" stroke="#c8c3ba" stroke-width="5" opacity=".7" />
                <path d="M890 600 L960 630 L1100 625 M1090 510 L1115 550 M1150 590 L1190 635 L1240 665 L1268 720 M825 730 L832 800 M570 745 L640 660" stroke="#666864" stroke-width="6" opacity=".35" />
              </g>
            </g>
            <g transform="translate(2200 780) scale(.8291 .5995)">
              <g filter="url(#b20)">
                <path d="M-100 190 L360 160 L560 200 L620 330 H-100Z" fill="#7b7c77" opacity=".75" />
                <path d="M-50 360 H620 L540 440 L400 450 L330 480 L50 470 L-50 440Z" fill="#7d7d78" opacity=".8" />
                <path d="M850 320 L1020 320 L1200 560 L1420 650 L1400 690 L1290 710 L1150 600 L900 400Z" fill="#7a7b77" />
                <path d="M-50 1150 L200 1110 L260 1150 L340 1190 L480 1150 L600 1160 L660 1240 L640 1300 L0 1320Z" fill="#8b8882" opacity=".9" />
                <path d="M-50 1330 H680 L700 1430 H400 L-50 1480Z" fill="#93908a" opacity=".8" />
                <path d="M660 1260 L720 1140 L900 1060 L1080 1020 L1290 900 L1400 900 L1190 1120 L1050 1190 L930 1330 L800 1450 L640 1400Z" fill="#817f7a" />
                <path d="M1290 900 L1340 800 L1420 830 L1400 900 L1290 1000Z" fill="#74736f" />
                <path d="M780 780 H1000 L1030 990 L860 1030 L700 1120 L720 900Z" fill="#bebab1" opacity=".8" />
              </g>
              <g filter="url(#b12)">
                <path d="M80 540 Q190 545 330 625 L325 665 Q200 630 85 600Z" fill="#747570" />
                <path d="M560 430 L650 415 L800 470 L785 745 L690 760 L575 735 L590 560Z" fill="#888882" />
                <path d="M340 500 L420 470 L540 520 L585 540 L575 730 L440 785 L390 740 L335 640Z" fill="#7d7d78" />
                <path d="M340 540 L440 500 L470 620 L440 750 L380 720Z" fill="#6f706c" opacity=".8" />
                <path d="M690 480 L790 480 L770 740 L700 750Z" fill="#999791" opacity=".6" />
                <path d="M810 480 L880 540 L980 580 L1010 760 L900 745 L785 735Z" fill="#797a74" />
                <path d="M820 530 L900 570 L940 640 L880 670 L820 650Z" fill="#6a6b67" opacity=".8" />
                <path d="M1050 600 L1180 640 L1180 700 L1060 700Z" fill="#80807a" />
              </g>
              <g filter="url(#b7)">
                <path d="M200 300 L300 180 L350 170 L250 290Z M540 280 L660 260 L710 240 L680 290 L570 300Z M330 180 L400 190 L390 320 L340 320Z M0 330 L90 190 L40 330Z" fill="#585b58" opacity=".6" />
                <path d="M290 200 L330 170 L280 330 H220Z M380 310 L420 220 L400 320Z M540 220 L640 240 L560 270Z" fill="#aaa69e" opacity=".7" />
                <path d="M-20 440 L200 410 L320 400 L380 430 L200 430Z" fill="#555855" opacity=".5" />
                <path d="M60 510 Q200 490 290 530 L330 620 Q200 530 60 540Z" fill="#aaa79f" opacity=".9" />
                <path d="M495 490 L550 440 L580 500 L560 600 L520 500Z" fill="#b0ada5" opacity=".9" />
                <path d="M870 490 L990 480 L1060 600 L1060 700 Q1000 600 890 540Z" fill="#aeaba3" opacity=".8" />
                <path d="M-10 470 L60 600 L90 680 L40 700 L-10 620Z" fill="#85837d" />
                <path d="M110 660 L140 740 M165 670 L185 740 M345 790 L370 820" stroke="#71726d" stroke-width="16" fill="none" opacity=".6" />
                <path d="M200 670 L225 790 M145 665 L160 740" stroke="#c0bcb3" stroke-width="14" opacity=".7" />
                <path d="M1130 500 L1160 560 L1290 640 L1280 600 L1330 650 L1410 650 L1400 690 L1300 700 L1200 690 L1140 570Z" fill="#4e5150" opacity=".6" />
                <path d="M930 350 L950 350 L935 420Z" fill="#4a4c4a" opacity=".9" />
                <path d="M655 1280 L665 1200 L720 1130 L870 1065 L980 1070 L960 1120 L860 1090 L760 1140 L700 1230 L690 1290Z" fill="#555653" opacity=".7" />
                <path d="M830 1260 L960 1170 L930 1240 L860 1300 L850 1380 L800 1400Z M1230 950 L1270 980 L1250 1010 L1160 1020Z M1310 880 L1360 840 L1350 890Z" fill="#4e504e" opacity=".7" />
                <path d="M760 1140 L900 1080 L930 1100 L830 1190 L780 1190Z M860 1250 L930 1240 L890 1300Z M720 1190 L740 1190 L715 1240Z" fill="#b2ada5" opacity=".9" />
                <path d="M1020 760 Q1000 830 1060 920 Q1090 980 1080 1010 M700 960 Q690 1040 710 1110" stroke="#8b8983" stroke-width="18" fill="none" opacity=".6" />
                <path d="M1120 770 L1190 780 L1270 840 M690 860 L720 850 M740 850 L760 890 M520 840 L535 880" stroke="#7c7b74" stroke-width="13" fill="none" opacity=".6" />
                <path d="M1310 830 L1410 700 L1415 850 L1370 830Z" fill="#aba8a0" />
                <path d="M700 1110 Q850 1040 1060 1010" stroke="#8b8983" stroke-width="16" fill="none" />
                <path d="M640 1340 L700 1330 L750 1400 L680 1420Z" fill="#76746f" opacity=".8" />
                <path d="M100 1230 L240 1170 L160 1260Z" fill="#a5a29a" opacity=".9" />
              </g>
              <g filter="url(#b2)" fill="none" stroke-linejoin="round" stroke-linecap="round">
                <path d="M100 425 L220 410 L330 400 L380 430" stroke="#504f4c" stroke-width="5" opacity=".8" />
                <path d="M420 400 L450 370 L475 400 L468 520 L500 500" stroke="#c0bbb2" stroke-width="7" />
                <path d="M440 385 L455 400 L452 520" stroke="#4a4b49" stroke-width="7" />
                <path d="M710 417 L745 417 M725 410 V422" stroke="#55564f" stroke-width="4" opacity=".7" />
                <path d="M0 480 L15 520 M0 640 L40 690" stroke="#4a4b49" stroke-width="9" opacity=".7" />
                <path d="M1140 510 L1180 570 L1260 610 L1340 635 M1290 640 L1345 680" stroke="#b4aea5" stroke-width="7" opacity=".8" />
                <path d="M780 1160 L830 1180 L870 1100 L900 1120 L950 1090 L960 1070 M690 1290 L660 1250 L720 1220 M880 1270 L930 1260 M1040 1170 L1060 1130 M1265 945 L1300 935 M1310 860 L1355 845" stroke="#c8c2b9" stroke-width="5" opacity=".85" />
                <path d="M670 1360 L700 1340 L710 1370 M660 1400 L690 1410 M830 1300 L850 1250 M1180 990 L1230 970" stroke="#c0b9b0" stroke-width="5" opacity=".8" />
                <path d="M815 1390 L850 1280 L960 1170 M720 1150 L705 1200 L730 1240 M870 1110 L910 1090" stroke="#484a48" stroke-width="6" opacity=".8" />
                <path d="M690 1000 L705 1100 M710 850 L735 880" stroke="#d0ccc3" stroke-width="5" opacity=".7" />
              </g>
            </g>
            <g mask="url(#rough)" class="relief"><rect x="1000" y="820" width="2400" height="880" filter="url(#relief)" /></g>
          </g>

          <g class="lbl">
            <text x="1364" y="984" textLength="181" lengthAdjust="spacingAndGlyphs" clip-path="url(#c0)">Cloud Point 1</text>
            <text x="2890" y="981" textLength="181" lengthAdjust="spacingAndGlyphs" clip-path="url(#c4)">Cloud Point 4</text>
            <text x="3283" y="1231" textLength="181" lengthAdjust="spacingAndGlyphs" clip-path="url(#c5)">Cloud Point 5</text>
            <text x="3286" y="1315" textLength="181" lengthAdjust="spacingAndGlyphs" clip-path="url(#c6)">Cloud Point 6</text>
            <text x="1341" y="1436" textLength="181" lengthAdjust="spacingAndGlyphs" clip-path="url(#c7)">Cloud Point 9</text>
            <text x="1611" y="1573" textLength="181" lengthAdjust="spacingAndGlyphs">Cloud Point 8</text>
          </g>
          <g fill="#fff"><circle cx="1351" cy="984" r="7" /><circle cx="2880" cy="983" r="8" /><circle cx="3272" cy="1233" r="8" /><circle cx="3267" cy="1314" r="6" /><circle cx="2759" cy="1564" r="7" /><circle cx="1597" cy="1573" r="7" /></g>
          <path d="M1348 989 L2878 986 L3270 1234 L3270 1321 L2764 1567 L1594 1578 L1324 1439 Z" fill="none" stroke="#90ee90" stroke-width="12.500" stroke-linejoin="round" />
          <text class="green" x="2129" y="1312" textLength="273" lengthAdjust="spacingAndGlyphs">Work area boundary</text>
          <path d="M2335 1291V1309M2328 1300H2342" stroke="#fff" stroke-width="2.500" />

          <g transform="translate(900 1760) scale(.33333)">
            <path d="M278 512 L345 270" stroke="#00f" stroke-width="24" /><path d="M358 222 L372 288 L317 266Z" fill="#00f" />
            <path d="M300 578 L610 665" stroke="#f00" stroke-width="24" /><path d="M670 681 L592 698 L600 636Z" fill="#f00" />
            <path d="M228 512 L303 532 L286 614 L208 592Z" fill="#fff" stroke="#000" stroke-width="20" stroke-linejoin="round" /><path d="M228 512 L303 532 L286 604 L208 582Z" fill="#fff" />
            <path d="M208 598 L284 620" stroke="#fff" stroke-width="8" stroke-dasharray="22 4" />
            <path d="M256 555 V450" stroke="#008000" stroke-width="22" /><path d="M214 380 Q230 362 262 370 L250 470 L240 470Z" fill="#008000" /><path d="M262 370 L318 408 L246 468Z" fill="#005800" />
          </g>
          <g class="axis"><text x="1017" y="1831">N</text><text x="960" y="1882">H</text><text x="1113" y="2024">E</text></g>
        </svg>

        <div class="vbar">
          <svg class="i41"><use href="#globe" /></svg><svg class="dd a"><path d="M0 0H20L10 12Z" fill="#fff" /></svg>
          <svg class="i41"><use href="#boxwire" /></svg><svg class="dd a"><path d="M0 0H20L10 12Z" fill="#fff" /></svg>
          <svg class="i41"><use href="#cubewire" /></svg><svg class="dd a"><path d="M0 0H20L10 12Z" fill="#fff" /></svg>
          <svg class="i41"><use href="#cube" /></svg><svg class="dd b"><path d="M0 0H20L10 12Z" fill="#fff" /></svg>
          <i class="sep"></i>
          <svg class="i41 o"><use href="#orange" /></svg><svg class="i41 c"><use href="#cloud" /></svg><svg class="dd d"><path d="M0 0H20L10 12Z" fill="#fff" /></svg>
          <i class="sep"></i>
          <svg class="i41 tz"><use href="#trapezoid" /></svg><svg class="i41 gr"><use href="#gridoff" /></svg>
          <svg class="i41 pb"><use href="#plusbox" /></svg><svg class="i41 gs"><use href="#globesync" /></svg>
          <svg class="grip" width="13" height="12" viewBox="0 0 13 12"><path d="M0 0H13V4L6.500 12L0 4Z" fill="#5c5c5c" /></svg>
        </div>
      </section>
    </main>

    <footer class="status">
      <svg class="i41"><use href="#chip1" /></svg><svg class="i41 s2"><use href="#chip2" /></svg>
      <span v-fit="201" class="t msg">1 item selected</span>
      <div class="sright">
        <div class="pressed"><svg class="i41"><use href="#compass" /></svg></div>
        <div class="pressed"><svg class="i41"><use href="#inspect" /></svg></div>
        <div class="sicons"><svg class="i41"><use href="#list" /></svg><svg class="i41"><use href="#layers" /></svg><svg class="i41"><use href="#building" /></svg><svg class="i41"><use href="#clapper" /></svg></div>
        <svg class="i41"><use href="#meter" /></svg><span v-fit="80" class="t">Meter</span><svg class="dd e"><path d="M0 0H20L10 12Z" fill="#fff" /></svg>
        <svg class="i41 gn"><use href="#gons" /></svg><span v-fit="68" class="t">Gons</span><svg class="dd e"><path d="M0 0H20L10 12Z" fill="#fff" /></svg>
        <svg class="i41 gn"><use href="#datum" /></svg><span v-fit="190" class="t">D51 Neu 2022</span><svg class="dd f"><path d="M0 0H20L10 12Z" fill="#fff" /></svg>
      </div>
    </footer>
  </div>
</template>

<style>
body { margin: 0; background: #404040; }
</style>

<style scoped>
.app { box-sizing: border-box; width: 3902px; height: 2317px; border: 4px solid #4c4c4c; background: #404040; display: flex; flex-direction: column; font: 29.5px/36.5px "Open Sans", "Noto Sans", sans-serif; color: #fff; overflow: hidden; }
.sheet { position: absolute; }
svg { display: block; flex: none; }
.t { display: inline-block; white-space: pre; transform-origin: 0 50%; flex: none; }
.i41 { width: 41px; height: 41px; }
.i39 { width: 39px; height: 39px; }
.i80 { width: 80px; height: 80px; margin-bottom: 4.5px; overflow: visible; }
.end { margin-left: auto; }
.dd { width: 20px; height: 12px; }

.title { height: 79px; flex: none; display: flex; }
.quick { width: 1716px; box-sizing: border-box; padding-left: 12px; display: flex; align-items: center; gap: 34.300px; }
.logo { margin-right: 3.500px; }
.caption { padding-top: 6px; }
.winbtns { margin-left: auto; margin-right: 42px; display: flex; align-items: center; gap: 78px; padding-bottom: 6px; }

.tabs { height: 59px; flex: none; margin: 0 10px; padding-left: 14px; display: flex; gap: 4px; background: linear-gradient(#404040 72%, #272727); }
.tab { height: 59px; display: flex; align-items: center; padding: 1px 26px 0; box-sizing: border-box; }
.tab.file { width: 147px; justify-content: center; padding: 1px 0 0; margin-right: 20px; background: linear-gradient(#6b8e99, #4d6b75); }
.tab.active { background: #cdcdcd; color: #4c4c4c; }
.tab.active ~ .tab { margin-left: -2px; }
.collapse { margin: 20px 29px 0 auto; }

.ribbon { height: 229px; flex: none; margin: 0 10px; display: flex; background: linear-gradient(#cdcdcd, #a1a1a1); border-bottom: 3px solid #0c0c0c; }
.group { box-sizing: border-box; border-right: 2px solid #484848; box-shadow: 2px 0 0 #dcdcdc; color: #111; }
.items { display: flex; height: 192px; }
.btn { display: flex; flex-direction: column; align-items: center; padding-top: 20px; box-sizing: border-box; }
.btn.off { color: #6a6a6a; }
.line { height: 36.5px; display: flex; align-items: center; }
.line.up { margin-top: -2px; }
.line .gap { margin-left: 9px; }
.gname { text-align: center; color: #505050; padding-left: 10px; }

.body { flex: none; height: 1854px; margin: 8px 0 0 8px; display: flex; gap: 11px; }
.navp { box-sizing: border-box; width: 762px; background: #a1a1a1; padding: 10px 10px 0; color: #404040; }
.nhead { height: 59px; background: #5f7f8a; color: #fff; display: flex; align-items: center; padding: 0 15px 0 10px; }
.nhead .t { margin-left: 16px; padding-top: 4px; }
.nhead .end { margin-bottom: 4px; }
.search { box-sizing: border-box; height: 61px; margin-top: 20px; background: #fff; border: 2px solid #888; padding: 12px 10px; }
.library { box-sizing: border-box; height: 1520px; margin-top: 11px; border: 2px solid #8a8a8a; background: #e9e9e9; }
.shead { box-sizing: border-box; height: 60px; display: flex; align-items: center; padding-left: 25px; background: #d9d9d9; font-weight: 700; color: #303030; border-bottom: 2px solid #a2a2a2; }
.shead .t { margin-left: 22px; }
.shead.box { height: 63px; border: 2px solid #8a8a8a; margin-top: 10px; }
.shead.box + .shead.box { margin-top: 14px; }
.tri { width: 17px; height: 17px; }
.tree { padding-top: 4px; }
.row { height: 61px; display: flex; align-items: center; padding-right: 8px; }
.row.sub { padding-left: 69px; }
.cell { flex: 1; height: 57px; display: flex; align-items: center; padding: 0 12px 0 22px; }
.sub .cell { padding-left: 17px; }
.sel { background: #f6e47c; }
.ric { margin: 0 10px 0 47px; overflow: visible; }
.on { color: #333; }
.dim { color: #8f8f8f; }

.view { width: 3102px; background: #a1a1a1; display: flex; flex-direction: column; }
.vtabs { height: 71px; display: flex; gap: 9px; background: #404040; }
.vtab { flex: 1; background: #7d7d7d; display: flex; align-items: center; padding: 6px 11px 0 18px; }
.vtab.first { flex: none; width: 1138px; box-sizing: border-box; padding: 6px 0 0 16px; }
.vtab .t { margin-left: 11px; padding-top: 2px; }
.vtab .end { margin-bottom: 11px; }
.scene { width: 3081px; height: 1677px; margin: 10px 0 3px 10px; background: #1f1f1f; }
.relief { mix-blend-mode: soft-light; opacity: .7; }
.lbl text { font-size: 29px; fill: #efefef; }
.green { font-size: 29px; fill: #90ee90; }
.axis { font-size: 38px; fill: #fff; }
.vbar { box-sizing: border-box; height: 80px; width: 3075px; margin-left: 13px; background: #404040; border: 2px solid #707070; display: flex; align-items: center; padding-left: 57px; }
.dd.a { margin: 0 54px 0 31px; }
.dd.b { margin: 0 33px 0 31px; }
.sep { width: 2px; height: 50px; background: #777; }
.o { margin-left: 17px; }
.c { margin-left: 21px; }
.dd.d { margin: 0 24px 0 25px; }
.tz { margin-left: 41px; margin-bottom: 3px; }
.gr { margin-left: 67px; margin-bottom: 3px; }
.pb { margin-left: auto; margin-bottom: 4px; }
.gs { margin-left: 68px; margin-bottom: 4px; }
.grip { margin: 50px 10px 0 49px; }

.status { height: 77px; flex: none; display: flex; align-items: center; padding: 13px 0 0 20px; box-sizing: border-box; }
.s2 { margin-left: 12px; }
.msg { margin-left: 12px; padding-top: 1px; }
.sright { margin-left: auto; display: flex; align-items: center; padding-right: 22px; }
.pressed { width: 57px; height: 53px; background: #808080; display: flex; align-items: center; justify-content: center; margin-right: 8px; }
.sicons { display: flex; gap: 24px; margin: 0 47px 0 8px; }
.sright .t { margin-left: 9px; padding-top: 1px; }
.dd.e { margin-left: 32px; }
.gn { margin-left: 49px; }
.dd.f { margin-left: 27px; }
</style>
